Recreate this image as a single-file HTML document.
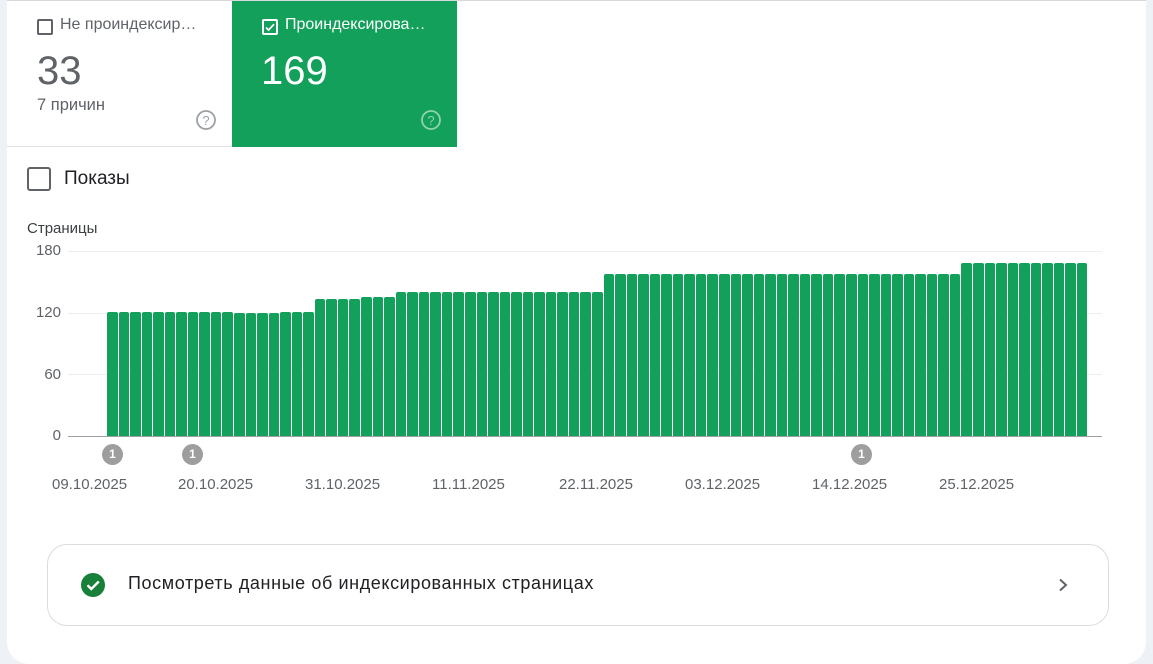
<!DOCTYPE html>
<html><head><meta charset="utf-8"><style>
*{margin:0;padding:0;box-sizing:border-box}
body{width:1153px;height:664px;background:#eef1f6;font-family:"Liberation Sans",Roboto,sans-serif;position:relative;overflow:hidden}
.card{position:absolute;left:7px;top:0;width:1139px;height:664px;background:#fff;border-radius:0 0 22px 22px;border-top:1px solid #d6d8dc}
.a{position:absolute}
.t1{left:7px;top:1px;width:225px;height:146px;background:#fff;border-bottom:1px solid #e0e0e0}
.t2{left:232px;top:1px;width:225px;height:146px;background:#12a05a}
.cb{position:absolute;width:16px;height:16px;border:2px solid #5f6368;border-radius:2px}
.grid{position:absolute;left:68px;width:1034px;height:1px;background:#eceef0}
.yl{position:absolute;width:61px;left:0;text-align:right;font-size:15px;color:#5f6368}
.bars{position:absolute;left:107px;top:200px;width:980px;height:236px;display:flex;align-items:flex-end}
.bars i{display:block;flex:1;margin-right:1px;background:#12a05a;border-radius:2px 2px 0 0}
.a1{height:124px}.b1{height:123px}.c1{height:137px}.d1{height:139px}.e1{height:144px}.f1{height:162px}.g1{height:173px}
.mk{position:absolute;top:444px;width:21px;height:21px;border-radius:50%;background:#9e9e9e;color:#fff;font-size:12px;font-weight:bold;text-align:center;line-height:21px}
.dt{position:absolute;top:476px;font-size:15px;color:#5f6368}
</style></head><body>
<div class="card"></div>
<div class="a t1">
 <div class="cb" style="left:30px;top:18px;border-color:#5f6368"></div>
 <div class="a" style="left:53px;top:15px;font-size:16px;color:#5f6368">Не проиндексир…</div>
 <div class="a" style="left:30px;top:48px;font-size:40px;color:#5f6368">33</div>
 <div class="a" style="left:30px;top:95px;font-size:16.5px;color:#5f6368">7 причин</div>
 <svg class="a" style="left:188px;top:108px" width="22" height="22" viewBox="0 0 22 22"><circle cx="11" cy="11" r="9" fill="none" stroke="#9aa0a6" stroke-width="1.8"/><text x="11" y="16" text-anchor="middle" font-size="13" fill="#9aa0a6" font-family="Liberation Sans">?</text></svg>
</div>
<div class="a t2">
 <div class="cb" style="left:30px;top:18px;border-color:#fff"></div>
 <svg class="a" style="left:32px;top:20px" width="12" height="12" viewBox="0 0 12 12"><path d="M2 6.5l2.6 2.6L10 3.2" stroke="#fff" stroke-width="1.8" fill="none"/></svg>
 <div class="a" style="left:53px;top:15px;font-size:16px;color:#fff">Проиндексирова…</div>
 <div class="a" style="left:29px;top:48px;font-size:40px;color:#fff">169</div>
 <svg class="a" style="left:188px;top:108px" width="22" height="22" viewBox="0 0 22 22"><circle cx="11" cy="11" r="9" fill="none" stroke="#8fd3ae" stroke-width="1.8"/><text x="11" y="16" text-anchor="middle" font-size="13" fill="#8fd3ae" font-family="Liberation Sans">?</text></svg>
</div>
<div class="cb" style="left:27px;top:167px;width:24px;height:24px;border-radius:3px"></div>
<div class="a" style="left:64px;top:168px;font-size:19px;color:#202124">Показы</div>
<div class="a" style="left:27px;top:220px;font-size:15px;color:#3c4043">Страницы</div>
<div class="grid" style="top:251px"></div>
<div class="grid" style="top:313px"></div>
<div class="grid" style="top:374px"></div>
<div class="yl" style="top:242px">180</div>
<div class="yl" style="top:304px">120</div>
<div class="yl" style="top:366px">60</div>
<div class="yl" style="top:427px">0</div>
<div class="bars">
<i class="a1"></i><i class="a1"></i><i class="a1"></i><i class="a1"></i><i class="a1"></i><i class="a1"></i><i class="a1"></i><i class="a1"></i><i class="a1"></i><i class="a1"></i><i class="a1"></i>
<i class="b1"></i><i class="b1"></i><i class="b1"></i><i class="b1"></i>
<i class="a1"></i><i class="a1"></i><i class="a1"></i>
<i class="c1"></i><i class="c1"></i><i class="c1"></i><i class="c1"></i>
<i class="d1"></i><i class="d1"></i><i class="d1"></i>
<i class="e1"></i><i class="e1"></i><i class="e1"></i><i class="e1"></i><i class="e1"></i><i class="e1"></i><i class="e1"></i><i class="e1"></i><i class="e1"></i><i class="e1"></i><i class="e1"></i><i class="e1"></i><i class="e1"></i><i class="e1"></i><i class="e1"></i><i class="e1"></i><i class="e1"></i><i class="e1"></i>
<i class="f1"></i><i class="f1"></i><i class="f1"></i><i class="f1"></i><i class="f1"></i><i class="f1"></i><i class="f1"></i><i class="f1"></i><i class="f1"></i><i class="f1"></i><i class="f1"></i><i class="f1"></i><i class="f1"></i><i class="f1"></i><i class="f1"></i><i class="f1"></i><i class="f1"></i><i class="f1"></i><i class="f1"></i><i class="f1"></i><i class="f1"></i><i class="f1"></i><i class="f1"></i><i class="f1"></i><i class="f1"></i><i class="f1"></i><i class="f1"></i><i class="f1"></i><i class="f1"></i><i class="f1"></i><i class="f1"></i>
<i class="g1"></i><i class="g1"></i><i class="g1"></i><i class="g1"></i><i class="g1"></i><i class="g1"></i><i class="g1"></i><i class="g1"></i><i class="g1"></i><i class="g1"></i><i class="g1" style="margin-right:0"></i>
</div>
<div class="a" style="left:68px;top:436px;width:1034px;height:1px;background:#9aa0a6"></div>
<div class="mk" style="left:102px">1</div>
<div class="mk" style="left:182px">1</div>
<div class="mk" style="left:851px">1</div>
<div class="dt" style="left:52px">09.10.2025</div>
<div class="dt" style="left:178px">20.10.2025</div>
<div class="dt" style="left:305px">31.10.2025</div>
<div class="dt" style="left:432px">11.11.2025</div>
<div class="dt" style="left:559px">22.11.2025</div>
<div class="dt" style="left:685px">03.12.2025</div>
<div class="dt" style="left:812px">14.12.2025</div>
<div class="dt" style="left:939px">25.12.2025</div>
<div class="a" style="left:47px;top:544px;width:1062px;height:82px;border:1px solid #dadce0;border-radius:20px"></div>
<svg class="a" style="left:80px;top:572px" width="26" height="26" viewBox="0 0 26 26"><circle cx="13" cy="13" r="12" fill="#188038"/><path d="M7.5 13.2l3.8 3.8 7.5-7.5" stroke="#fff" stroke-width="2.4" fill="none"/></svg>
<div class="a" style="left:128px;top:573px;font-size:18px;letter-spacing:0.6px;color:#202124">Посмотреть данные об индексированных страницах</div>
<svg class="a" style="left:1056px;top:577px" width="14" height="16" viewBox="0 0 14 16"><path d="M4 2.5l6 5.5-6 5.5" stroke="#5f6368" stroke-width="2" fill="none"/></svg>
</body></html>
